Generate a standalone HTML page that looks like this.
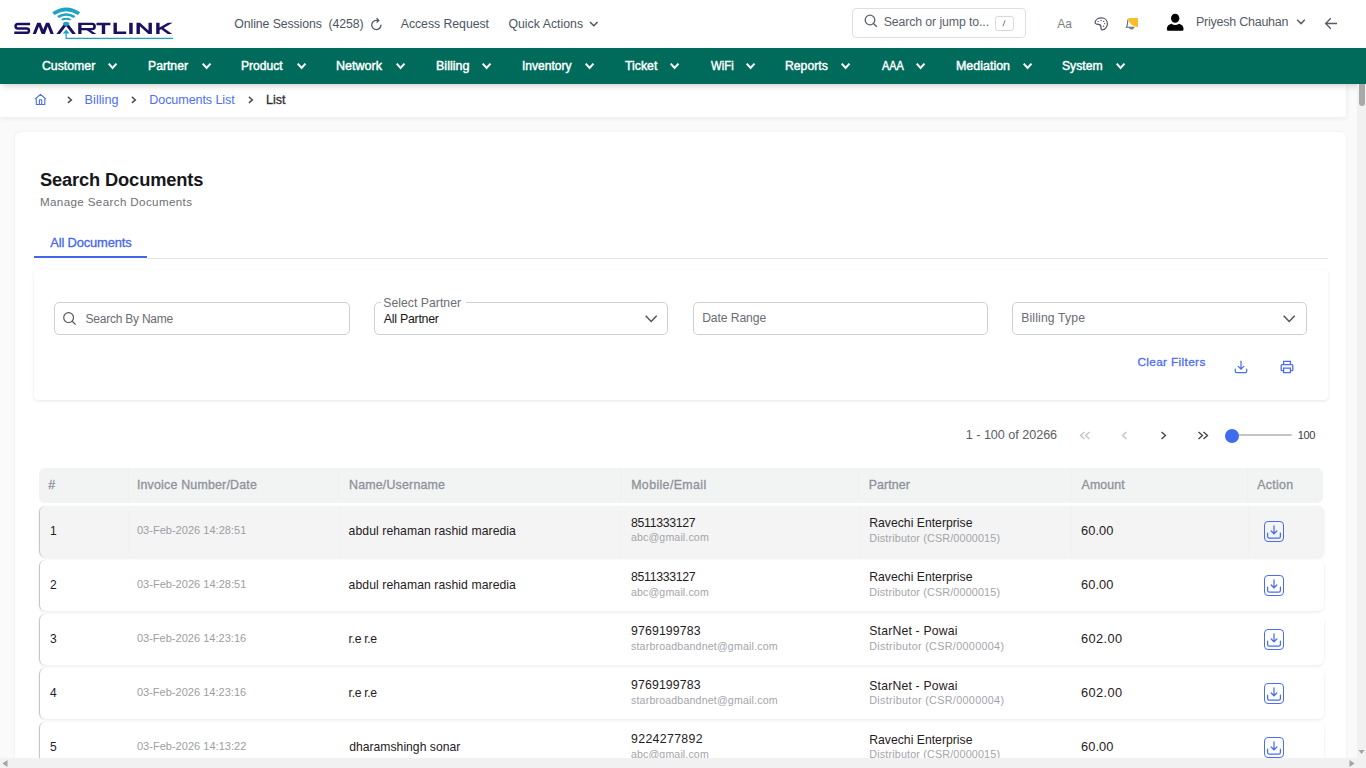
<!DOCTYPE html>
<html><head><meta charset="utf-8">
<style>
*{box-sizing:border-box;margin:0;padding:0}
html,body{width:1366px;height:768px;overflow:hidden;background:#fff;font-family:"Liberation Sans",sans-serif}
.a{position:absolute}
.t{position:absolute;white-space:pre;line-height:1;z-index:5}
svg{position:absolute;overflow:visible}
#nav{position:absolute;left:0;top:48px;width:1366px;height:36px;background:#006a5b;z-index:4;box-shadow:0 3px 7px -2px rgba(0,0,0,.22)}
#main{position:absolute;left:0;top:84px;width:1357px;height:674px;background:#fafafa;overflow:hidden}
#bc{position:absolute;left:0;top:0;width:1346px;height:33px;background:#fff;box-shadow:0 1px 5px rgba(0,0,0,.08)}
#card{position:absolute;left:15px;top:48px;width:1331px;height:720px;background:#fff;border-radius:6px;box-shadow:0 0 3px rgba(0,0,0,.07)}
#vsb{position:absolute;left:1357px;top:84px;width:9px;height:674px;background:#f1f1f1;z-index:6}
#hsb{position:absolute;left:0;top:758px;width:1366px;height:10px;background:#f1f1f1;z-index:6}
.inp{position:absolute;border:1.2px solid #cdd0d7;border-radius:5px;background:#fff}
.row{position:absolute;left:39px;width:1285px;height:50.5px;border-radius:6px;background:#fff;border-left:1px solid #c3c7cf;box-shadow:0 1px 3px rgba(0,0,0,.09)}
.sep{position:absolute;top:0;width:1px;height:100%;background:rgba(0,0,0,.012)}
.act{position:absolute;left:1263.5px;width:20.5px;height:21px;border:1.4px solid #4c6cf3;border-radius:4px}
</style></head><body>
<!-- header -->
<svg style="left:0;top:0" width="190" height="48" viewBox="0 0 190 48">
  <path d="M30.1 24.05 H17.9 Q15.55 24.05 15.55 26.3 Q15.55 28.5 17.9 28.5 H26.6 Q28.95 28.5 28.95 30.65 Q28.95 32.75 26.6 32.75 H14.3" fill="none" stroke="#1b1060" stroke-width="2.5"/>
  <g fill="#1b1060">
    <path d="M32.7 34 L37.2 22.8 L40.5 22.8 L43.25 29.6 L46 22.8 L49.3 22.8 L53.8 34 L50.5 34 L47.65 26.6 L44.9 34 L41.6 34 L38.85 26.6 L36 34 Z"/>
    <path d="M56.4 34 L64.3 23.5 L67.9 23.5 L75.9 34 L72.3 34 L66.1 25.9 L60 34 Z"/>
    <path d="M78.2 22.8 H92.3 Q95.9 22.8 95.9 26.4 Q95.9 30.2 92.3 30.2 H81.5 V28 H92 Q93.2 28 93.2 26.45 Q93.2 25.05 92 25.05 H81.5 V34 H78.2 Z"/>
    <path d="M85.8 29.6 L89.6 29.6 L96.5 34 L92.2 34 Z"/>
    <path d="M96.5 22.8 H110.4 V25.3 H105.2 V34 H101.8 V25.3 H96.5 Z"/>
    <path d="M113.5 22.8 H116.9 V31.5 H126.2 V34 H113.5 Z"/>
    <path d="M129.2 22.8 H132.7 V34 H129.2 Z"/>
    <path d="M136.5 34 V22.8 H140 L148.5 30.6 V22.8 H151.9 V34 H148.4 L139.9 26.2 V34 Z"/>
    <path d="M156.2 22.8 H159.6 V27.4 L167.9 22.8 H172.6 L163.6 27.9 L172.3 34 H167.7 L161.3 29.2 L159.6 30.1 V34 H156.2 Z"/>
  </g>
  <g fill="#1ea4c2" stroke="none">
    <path d="M52.2 12.3 Q66.2 2.6 80.2 12.3 L77.9 15 Q66.2 7.6 54.5 15 Z"/>
    <path d="M57.1 15.9 Q66.2 10.6 75.5 15.9 L73.7 17.9 Q66.2 13.6 58.9 17.9 Z"/>
    <path d="M61 19.2 Q66.2 16.3 71.3 19.2 L70 20.6 Q66.2 18.7 62.3 20.6 Z"/>
    <ellipse cx="66.15" cy="23.75" rx="3.15" ry="2.05"/>
    <path d="M62.7 33.4 L66.15 29.6 L69.6 33.4 Z"/>
  </g>
  <path d="M66.15 33 V38.4 H173" fill="none" stroke="#1ea4c2" stroke-width="1.2"/>
</svg>
<!-- refresh icon -->
<svg style="left:370px;top:17px" width="14" height="14" viewBox="0 0 14 14"><path d="M10.9 7.6 A4.6 4.6 0 1 1 6.4 3.4 H8.6 M6.6 1.2 L8.8 3.4 L6.6 5.6" fill="none" stroke="#4d5562" stroke-width="1.25"/></svg>
<!-- quick actions chevron -->
<svg style="left:589px;top:20px" width="10" height="8" viewBox="0 0 10 8"><path d="M1 2 L4.8 5.8 L8.6 2" fill="none" stroke="#4d5562" stroke-width="1.5"/></svg>
<!-- search box -->
<div class="a" style="left:852px;top:8px;width:174px;height:30px;border:1px solid #dcdfe5;border-radius:4px"></div>
<svg style="left:864px;top:14px" width="14" height="14" viewBox="0 0 14 14"><circle cx="6" cy="6" r="4.8" fill="none" stroke="#5a616d" stroke-width="1.3"/><path d="M9.5 9.5 L12.8 12.8" stroke="#5a616d" stroke-width="1.4"/></svg>
<div class="a" style="left:994.5px;top:15.5px;width:19px;height:15px;border:1px solid #d6d9de;border-radius:3px"></div>
<svg style="left:1000px;top:18px" width="8" height="10" viewBox="0 0 8 10"><path d="M5.1 2.4 L3 8.2" stroke="#6f757e" stroke-width="0.95"/></svg>
<!-- palette icon -->
<svg style="left:1094px;top:17px" width="15" height="14" viewBox="0 0 15 14"><path d="M7.5 0.9 C11 0.9 13.4 3.5 13.4 6.8 C13.4 10.4 10.8 12.8 8.3 12.8 C7.2 12.8 6.9 11.8 7 10.5 C7.1 8.6 6.3 7.6 4.4 7.4 C2.5 7.2 1 6.9 1.1 5.6 C1.3 3 4 0.9 7.5 0.9 Z" fill="none" stroke="#4f5560" stroke-width="1.2"/><g fill="#4f5560"><circle cx="4.3" cy="4.6" r=".7"/><circle cx="7.1" cy="3.5" r=".7"/><circle cx="9.7" cy="4.4" r=".7"/><circle cx="10.7" cy="6.6" r=".7"/><circle cx="9.6" cy="9.3" r=".7"/></g></svg>
<!-- bell -->
<svg style="left:1124px;top:17px" width="16" height="14" viewBox="0 0 16 14"><path d="M3.9 2.6 C3.7 5 3.5 8.6 2.4 10.2 H10.5 M5.6 10.8 Q7.5 12.9 9.4 10.8" fill="none" stroke="#5f6670" stroke-width="1.1"/><path d="M4.2 1 H14 V10 C9 10 4.6 6.5 4.2 1 Z" fill="#fbbc2a"/></svg>
<!-- user -->
<svg style="left:1166px;top:13px" width="19" height="19" viewBox="0 0 19 19"><ellipse cx="9.2" cy="5.3" rx="4.15" ry="4.5" fill="#000"/><path d="M0.8 16.2 C0.8 13.3 2.8 11.4 5.4 10.8 Q9.2 13.4 13 10.8 C15.6 11.4 17.6 13.3 17.6 16.2 Q17.6 17.8 16 17.8 H2.4 Q0.8 17.8 0.8 16.2 Z" fill="#000"/></svg>
<svg style="left:1296px;top:18px" width="10" height="8" viewBox="0 0 10 8"><path d="M1.2 1.8 L5 5.6 L8.8 1.8" fill="none" stroke="#555c68" stroke-width="1.5"/></svg>
<!-- back arrow -->
<svg style="left:1324px;top:17px" width="14" height="13" viewBox="0 0 14 13"><path d="M13 6.5 H1.8 M6.8 1.3 L1.6 6.5 L6.8 11.7" fill="none" stroke="#555c68" stroke-width="1.3"/></svg>

<!-- nav -->
<div id="nav">
<!--NAVCHEV-->
</div>

<div id="main">
  <div id="bc"></div>
  <div id="card"></div>
</div>
<svg style="left:107.30px;top:62.20px;z-index:5" width="11.2" height="7.6" viewBox="0 0 11.2 7.6"><path d="M1.7 1.7 L5.60 6.00 L9.50 1.7" fill="none" stroke="#fff" stroke-width="2.0"/></svg>
<svg style="left:201.00px;top:62.20px;z-index:5" width="11.2" height="7.6" viewBox="0 0 11.2 7.6"><path d="M1.7 1.7 L5.60 6.00 L9.50 1.7" fill="none" stroke="#fff" stroke-width="2.0"/></svg>
<svg style="left:295.50px;top:62.20px;z-index:5" width="11.2" height="7.6" viewBox="0 0 11.2 7.6"><path d="M1.7 1.7 L5.60 6.00 L9.50 1.7" fill="none" stroke="#fff" stroke-width="2.0"/></svg>
<svg style="left:395.20px;top:62.20px;z-index:5" width="11.2" height="7.6" viewBox="0 0 11.2 7.6"><path d="M1.7 1.7 L5.60 6.00 L9.50 1.7" fill="none" stroke="#fff" stroke-width="2.0"/></svg>
<svg style="left:481.20px;top:62.20px;z-index:5" width="11.2" height="7.6" viewBox="0 0 11.2 7.6"><path d="M1.7 1.7 L5.60 6.00 L9.50 1.7" fill="none" stroke="#fff" stroke-width="2.0"/></svg>
<svg style="left:584.00px;top:62.20px;z-index:5" width="11.2" height="7.6" viewBox="0 0 11.2 7.6"><path d="M1.7 1.7 L5.60 6.00 L9.50 1.7" fill="none" stroke="#fff" stroke-width="2.0"/></svg>
<svg style="left:669.10px;top:62.20px;z-index:5" width="11.2" height="7.6" viewBox="0 0 11.2 7.6"><path d="M1.7 1.7 L5.60 6.00 L9.50 1.7" fill="none" stroke="#fff" stroke-width="2.0"/></svg>
<svg style="left:745.00px;top:62.20px;z-index:5" width="11.2" height="7.6" viewBox="0 0 11.2 7.6"><path d="M1.7 1.7 L5.60 6.00 L9.50 1.7" fill="none" stroke="#fff" stroke-width="2.0"/></svg>
<svg style="left:840.30px;top:62.20px;z-index:5" width="11.2" height="7.6" viewBox="0 0 11.2 7.6"><path d="M1.7 1.7 L5.60 6.00 L9.50 1.7" fill="none" stroke="#fff" stroke-width="2.0"/></svg>
<svg style="left:915.30px;top:62.20px;z-index:5" width="11.2" height="7.6" viewBox="0 0 11.2 7.6"><path d="M1.7 1.7 L5.60 6.00 L9.50 1.7" fill="none" stroke="#fff" stroke-width="2.0"/></svg>
<svg style="left:1022.40px;top:62.20px;z-index:5" width="11.2" height="7.6" viewBox="0 0 11.2 7.6"><path d="M1.7 1.7 L5.60 6.00 L9.50 1.7" fill="none" stroke="#fff" stroke-width="2.0"/></svg>
<svg style="left:1115.00px;top:62.20px;z-index:5" width="11.2" height="7.6" viewBox="0 0 11.2 7.6"><path d="M1.7 1.7 L5.60 6.00 L9.50 1.7" fill="none" stroke="#fff" stroke-width="2.0"/></svg>
<svg style="left:34px;top:93px;z-index:5" width="14" height="13" viewBox="0 0 14 13"><path d="M1.2 6 L6.5 1.3 L11.8 6 M2.3 5.1 V11.5 H10.8 V5.1 M5.4 11.5 V6.8 H7.7 V11.5" fill="none" stroke="#4f6ef2" stroke-width="1.1" stroke-linejoin="round"/></svg>
<svg style="left:66.7px;top:96px;z-index:5" width="6" height="8" viewBox="0 0 6 8"><path d="M0.9 0.9 L4.4 3.9 L0.9 6.9" fill="none" stroke="#4a4c51" stroke-width="1.4"/></svg>
<svg style="left:131.2px;top:96px;z-index:5" width="6" height="8" viewBox="0 0 6 8"><path d="M0.9 0.9 L4.4 3.9 L0.9 6.9" fill="none" stroke="#4a4c51" stroke-width="1.4"/></svg>
<svg style="left:248.0px;top:96px;z-index:5" width="6" height="8" viewBox="0 0 6 8"><path d="M0.9 0.9 L4.4 3.9 L0.9 6.9" fill="none" stroke="#4a4c51" stroke-width="1.4"/></svg>
<div class="a" style="left:147px;top:258px;width:1181px;height:1px;background:#e3e4e6"></div>
<div class="a" style="left:34px;top:256px;width:113px;height:2.3px;background:#4466ee"></div>
<div class="a" style="left:33.5px;top:270px;width:1294.5px;height:129.5px;border-radius:4px;background:#fff;box-shadow:0 1px 3px rgba(0,0,0,.1)"></div>
<div class="inp" style="left:54px;top:301.5px;width:296px;height:33.3px"></div>
<svg style="left:62px;top:310.5px;z-index:5" width="15" height="15" viewBox="0 0 15 15"><circle cx="6.6" cy="6.6" r="4.9" fill="none" stroke="#55585e" stroke-width="1.2"/><path d="M10.2 10.2 L13.6 13.6" stroke="#55585e" stroke-width="1.3"/></svg>
<div class="inp" style="left:374px;top:301.5px;width:294px;height:33.3px"></div>
<div class="a" style="left:380.5px;top:298px;width:85.5px;height:6px;background:#fff"></div>
<svg style="left:643.80px;top:313.80px;z-index:5" width="14.4" height="9.0" viewBox="0 0 14.4 9.0"><path d="M1.7 1.7 L7.20 7.40 L12.70 1.7" fill="none" stroke="#505358" stroke-width="1.5"/></svg>
<div class="inp" style="left:693px;top:301.5px;width:295px;height:33.3px"></div>
<div class="inp" style="left:1012px;top:301.5px;width:295px;height:33.3px"></div>
<svg style="left:1282.30px;top:314.20px;z-index:5" width="14.4" height="9.0" viewBox="0 0 14.4 9.0"><path d="M1.7 1.7 L7.20 7.40 L12.70 1.7" fill="none" stroke="#505358" stroke-width="1.5"/></svg>
<svg style="left:1233px;top:359px;z-index:5" width="16" height="16" viewBox="0 0 16 16"><path d="M8 2.2 V10 M5.2 7.4 L8 10.2 L10.8 7.4 M2.3 10 V12.2 Q2.3 13.6 3.7 13.6 H12.3 Q13.7 13.6 13.7 12.2 V10" fill="none" stroke="#4c6cf3" stroke-width="1.25" stroke-linecap="round"/></svg>
<svg style="left:1279px;top:359px;z-index:5" width="16" height="16" viewBox="0 0 16 16"><path d="M4.6 5.6 V2.4 H11.4 V5.6 M4.6 11.6 H2.8 Q2.2 11.6 2.2 11 V6.6 Q2.2 5.6 3.2 5.6 H12.8 Q13.8 5.6 13.8 6.6 V11 Q13.8 11.6 13.2 11.6 H11.4 M4.6 9.2 H11.4 V13.6 H4.6 Z" fill="none" stroke="#4c6cf3" stroke-width="1.3"/></svg>
<svg style="left:1078.5px;top:431.0px;z-index:5" width="12" height="10" viewBox="0 0 12 10"><path d="M5.5 1 L1.5 4.5 L5.5 8 M10.5 1 L6.5 4.5 L10.5 8" fill="none" stroke="#c0c2c6" stroke-width="1.3"/></svg>
<svg style="left:1121.0px;top:431.0px;z-index:5" width="7" height="10" viewBox="0 0 7 10"><path d="M5.5 1 L1.5 4.5 L5.5 8" fill="none" stroke="#c0c2c6" stroke-width="1.3"/></svg>
<svg style="left:1159.8px;top:431.0px;z-index:5" width="7" height="10" viewBox="0 0 7 10"><path d="M1.5 1 L5.5 4.5 L1.5 8" fill="none" stroke="#3f4146" stroke-width="1.3"/></svg>
<svg style="left:1197.2px;top:431.0px;z-index:5" width="12" height="10" viewBox="0 0 12 10"><path d="M1.5 1 L5.5 4.5 L1.5 8 M6.5 1 L10.5 4.5 L6.5 8" fill="none" stroke="#3f4146" stroke-width="1.3"/></svg>
<div class="a" style="left:1232px;top:434.3px;width:59.5px;height:2px;background:#c3c4c6;border-radius:1px"></div>
<div class="a" style="left:1224.6px;top:428.6px;width:14px;height:14px;background:#3d6cf0;border-radius:50%"></div>
<div class="a" style="left:39px;top:468px;width:1284px;height:34.5px;background:#f2f3f3;border-radius:6px"></div>
<div class="a" style="left:127.6px;top:468px;width:1px;height:34.5px;background:rgba(0,0,0,.012)"></div>
<div class="a" style="left:337.7px;top:468px;width:1px;height:34.5px;background:rgba(0,0,0,.012)"></div>
<div class="a" style="left:620px;top:468px;width:1px;height:34.5px;background:rgba(0,0,0,.012)"></div>
<div class="a" style="left:857.7px;top:468px;width:1px;height:34.5px;background:rgba(0,0,0,.012)"></div>
<div class="a" style="left:1070.3px;top:468px;width:1px;height:34.5px;background:rgba(0,0,0,.012)"></div>
<div class="a" style="left:1247.4px;top:468px;width:1px;height:34.5px;background:rgba(0,0,0,.012)"></div>
<div class="row" style="top:506.00px;background:#f4f4f4"><div class="sep" style="left:88.6px"></div><div class="sep" style="left:298.7px"></div><div class="sep" style="left:581px"></div><div class="sep" style="left:818.7px"></div><div class="sep" style="left:1031.3px"></div><div class="sep" style="left:1208.4px"></div></div>
<div class="act" style="top:521.00px;z-index:5"></div>
<svg style="left:1266px;top:523.50px;z-index:5" width="16" height="16" viewBox="0 0 16 16"><path d="M8 1.8 V9.6 M5.2 7 L8 9.8 L10.8 7 M1.6 9.2 V12.4 Q1.6 14.1 3.3 14.1 H12.7 Q14.4 14.1 14.4 12.4 V9.2" fill="none" stroke="#4c6cf3" stroke-width="1.25" stroke-linecap="round"/></svg>
<div class="row" style="top:560.10px;background:#fff"></div>
<div class="act" style="top:575.10px;z-index:5"></div>
<svg style="left:1266px;top:577.60px;z-index:5" width="16" height="16" viewBox="0 0 16 16"><path d="M8 1.8 V9.6 M5.2 7 L8 9.8 L10.8 7 M1.6 9.2 V12.4 Q1.6 14.1 3.3 14.1 H12.7 Q14.4 14.1 14.4 12.4 V9.2" fill="none" stroke="#4c6cf3" stroke-width="1.25" stroke-linecap="round"/></svg>
<div class="row" style="top:614.20px;background:#fff"></div>
<div class="act" style="top:629.20px;z-index:5"></div>
<svg style="left:1266px;top:631.70px;z-index:5" width="16" height="16" viewBox="0 0 16 16"><path d="M8 1.8 V9.6 M5.2 7 L8 9.8 L10.8 7 M1.6 9.2 V12.4 Q1.6 14.1 3.3 14.1 H12.7 Q14.4 14.1 14.4 12.4 V9.2" fill="none" stroke="#4c6cf3" stroke-width="1.25" stroke-linecap="round"/></svg>
<div class="row" style="top:668.30px;background:#fff"></div>
<div class="act" style="top:683.30px;z-index:5"></div>
<svg style="left:1266px;top:685.80px;z-index:5" width="16" height="16" viewBox="0 0 16 16"><path d="M8 1.8 V9.6 M5.2 7 L8 9.8 L10.8 7 M1.6 9.2 V12.4 Q1.6 14.1 3.3 14.1 H12.7 Q14.4 14.1 14.4 12.4 V9.2" fill="none" stroke="#4c6cf3" stroke-width="1.25" stroke-linecap="round"/></svg>
<div class="row" style="top:722.40px;background:#fff"></div>
<div class="act" style="top:737.40px;z-index:5"></div>
<svg style="left:1266px;top:739.90px;z-index:5" width="16" height="16" viewBox="0 0 16 16"><path d="M8 1.8 V9.6 M5.2 7 L8 9.8 L10.8 7 M1.6 9.2 V12.4 Q1.6 14.1 3.3 14.1 H12.7 Q14.4 14.1 14.4 12.4 V9.2" fill="none" stroke="#4c6cf3" stroke-width="1.25" stroke-linecap="round"/></svg>
<div id="vsb"><div class="a" style="left:1.5px;top:0;width:6.5px;height:21.5px;background:#a9a9a9;border-radius:0 0 4px 4px"></div>
<svg style="left:0;top:664px" width="9" height="8" viewBox="0 0 9 8"><path d="M1.5 2 H7.5 L4.5 6 Z" fill="#a3a3a3"/></svg></div>
<div id="hsb">
<svg style="left:1px;top:1px" width="8" height="9" viewBox="0 0 8 9"><path d="M6.5 1 V8 L1.5 4.5 Z" fill="#a3a3a3"/></svg>
<svg style="left:1348px;top:1px" width="8" height="9" viewBox="0 0 8 9"><path d="M1.5 1 V8 L6.5 4.5 Z" fill="#a3a3a3"/></svg>
</div>
<div class="t" id="t0" style="left:234.30px;top:17.55px;font-size:12.3px;color:#4d5562;letter-spacing:-0.090px">Online Sessions  (4258)</div>
<div class="t" id="t1" style="left:400.75px;top:18.14px;font-size:12.3px;color:#4d5562;letter-spacing:-0.046px">Access Request</div>
<div class="t" id="t2" style="left:508.40px;top:18.14px;font-size:12.3px;color:#4d5562;letter-spacing:0.020px">Quick Actions</div>
<div class="t" id="t3" style="left:883.70px;top:15.65px;font-size:12.3px;color:#5a616d;letter-spacing:-0.100px">Search or jump to...</div>
<div class="t" id="t4" style="left:1057.30px;top:17.90px;font-size:12px;color:#7a7f87">Aa</div>
<div class="t" id="t5" style="left:1196.00px;top:15.95px;font-size:12.5px;color:#555c68;letter-spacing:-0.244px">Priyesh Chauhan</div>
<div class="t" id="t6" style="left:42.00px;top:58.89px;font-size:13.3px;color:#ffffff;-webkit-text-stroke:0.45px #ffffff;transform:scaleX(0.9236);transform-origin:0 0">Customer</div>
<div class="t" id="t7" style="left:148.00px;top:58.89px;font-size:13.3px;color:#ffffff;-webkit-text-stroke:0.45px #ffffff;transform:scaleX(0.9173);transform-origin:0 0">Partner</div>
<div class="t" id="t8" style="left:241.00px;top:58.89px;font-size:13.3px;color:#ffffff;-webkit-text-stroke:0.45px #ffffff;transform:scaleX(0.9085);transform-origin:0 0">Product</div>
<div class="t" id="t9" style="left:336.00px;top:58.89px;font-size:13.3px;color:#ffffff;-webkit-text-stroke:0.45px #ffffff;transform:scaleX(0.9433);transform-origin:0 0">Network</div>
<div class="t" id="t10" style="left:435.55px;top:58.89px;font-size:13.3px;color:#ffffff;-webkit-text-stroke:0.45px #ffffff;transform:scaleX(0.9421);transform-origin:0 0">Billing</div>
<div class="t" id="t11" style="left:521.60px;top:58.89px;font-size:13.3px;color:#ffffff;-webkit-text-stroke:0.45px #ffffff;transform:scaleX(0.9074);transform-origin:0 0">Inventory</div>
<div class="t" id="t12" style="left:625.20px;top:58.89px;font-size:13.3px;color:#ffffff;-webkit-text-stroke:0.45px #ffffff;transform:scaleX(0.9254);transform-origin:0 0">Ticket</div>
<div class="t" id="t13" style="left:710.55px;top:58.89px;font-size:13.3px;color:#ffffff;-webkit-text-stroke:0.45px #ffffff;transform:scaleX(0.8536);transform-origin:0 0">WiFi</div>
<div class="t" id="t14" style="left:785.00px;top:58.89px;font-size:13.3px;color:#ffffff;-webkit-text-stroke:0.45px #ffffff;transform:scaleX(0.9186);transform-origin:0 0">Reports</div>
<div class="t" id="t15" style="left:881.80px;top:58.89px;font-size:13.3px;color:#ffffff;-webkit-text-stroke:0.45px #ffffff;transform:scaleX(0.8212);transform-origin:0 0">AAA</div>
<div class="t" id="t16" style="left:955.80px;top:58.89px;font-size:13.3px;color:#ffffff;-webkit-text-stroke:0.45px #ffffff;transform:scaleX(0.9366);transform-origin:0 0">Mediation</div>
<div class="t" id="t17" style="left:1062.00px;top:58.89px;font-size:13.3px;color:#ffffff;-webkit-text-stroke:0.45px #ffffff;transform:scaleX(0.9140);transform-origin:0 0">System</div>
<div class="t" id="t18" style="left:84.60px;top:93.89px;font-size:12.6px;color:#4f6ef2;letter-spacing:0.047px">Billing</div>
<div class="t" id="t19" style="left:149.30px;top:93.89px;font-size:12.6px;color:#4f6ef2;letter-spacing:-0.109px">Documents List</div>
<div class="t" id="t20" style="left:266.00px;top:93.59px;font-size:12.6px;color:#2f3033;-webkit-text-stroke:0.3px #2f3033;letter-spacing:-0.053px">List</div>
<div class="t" id="t21" style="left:40.00px;top:170.54px;font-size:18.3px;color:#16171a;font-weight:bold;letter-spacing:-0.145px">Search Documents</div>
<div class="t" id="t22" style="left:40.00px;top:195.74px;font-size:11.6px;color:#6d7076;letter-spacing:0.377px">Manage Search Documents</div>
<div class="t" id="t23" style="left:50.20px;top:237.14px;font-size:12.9px;color:#4466ee;-webkit-text-stroke:0.3px #4466ee;letter-spacing:-0.134px">All Documents</div>
<div class="t" id="t24" style="left:85.60px;top:313.00px;font-size:12px;color:#6a6d73;letter-spacing:-0.239px">Search By Name</div>
<div class="t" id="t25" style="left:383.30px;top:296.63px;font-size:12.2px;color:#6a6d73;letter-spacing:0.040px">Select Partner</div>
<div class="t" id="t26" style="left:383.70px;top:313.26px;font-size:12.4px;color:#17181b;letter-spacing:-0.254px">All Partner</div>
<div class="t" id="t27" style="left:702.20px;top:311.63px;font-size:12.2px;color:#6a6d73;letter-spacing:-0.116px">Date Range</div>
<div class="t" id="t28" style="left:1021.20px;top:311.63px;font-size:12.2px;color:#6a6d73;letter-spacing:0.152px">Billing Type</div>
<div class="t" id="t29" style="left:1137.40px;top:356.67px;font-size:11.8px;color:#4c6cf3;-webkit-text-stroke:0.3px #4c6cf3;letter-spacing:0.361px">Clear Filters</div>
<div class="t" id="t30" style="left:965.80px;top:428.59px;font-size:12.6px;color:#5b5e63;letter-spacing:-0.028px">1 - 100 of 20266</div>
<div class="t" id="t31" style="left:1297.80px;top:429.65px;font-size:11px;color:#3a3c40;letter-spacing:-0.442px">100</div>
<div class="t" id="t32" style="left:48.30px;top:478.56px;font-size:12.4px;color:#8e929a;-webkit-text-stroke:0.3px #8e929a">#</div>
<div class="t" id="t33" style="left:136.90px;top:478.56px;font-size:12.4px;color:#8e929a;-webkit-text-stroke:0.3px #8e929a;letter-spacing:0.197px">Invoice Number/Date</div>
<div class="t" id="t34" style="left:349.00px;top:478.56px;font-size:12.4px;color:#8e929a;-webkit-text-stroke:0.3px #8e929a;letter-spacing:0.196px">Name/Username</div>
<div class="t" id="t35" style="left:631.20px;top:478.56px;font-size:12.4px;color:#8e929a;-webkit-text-stroke:0.3px #8e929a;letter-spacing:0.365px">Mobile/Email</div>
<div class="t" id="t36" style="left:868.80px;top:478.56px;font-size:12.4px;color:#8e929a;-webkit-text-stroke:0.3px #8e929a;letter-spacing:0.063px">Partner</div>
<div class="t" id="t37" style="left:1081.60px;top:478.56px;font-size:12.4px;color:#8e929a;-webkit-text-stroke:0.3px #8e929a;letter-spacing:0.060px">Amount</div>
<div class="t" id="t38" style="left:1257.20px;top:478.56px;font-size:12.4px;color:#8e929a;-webkit-text-stroke:0.3px #8e929a;letter-spacing:0.313px">Action</div>
<div class="t" id="t39" style="left:50.00px;top:524.60px;font-size:12px;color:#1f2023">1</div>
<div class="t" id="t40" style="left:136.90px;top:525.05px;font-size:11px;color:#9c9ea3;letter-spacing:0.031px">03-Feb-2026 14:28:51</div>
<div class="t" id="t41" style="left:348.60px;top:525.03px;font-size:12.2px;color:#1f2023;letter-spacing:0.074px">abdul rehaman rashid maredia</div>
<div class="t" id="t42" style="left:631.00px;top:516.64px;font-size:12.3px;color:#1f2023;letter-spacing:-0.322px">8511333127</div>
<div class="t" id="t43" style="left:631.00px;top:532.44px;font-size:10.6px;color:#a3a5aa;letter-spacing:0.134px">abc@gmail.com</div>
<div class="t" id="t44" style="left:869.25px;top:516.83px;font-size:12.2px;color:#1f2023;letter-spacing:0.012px">Ravechi Enterprise</div>
<div class="t" id="t45" style="left:869.25px;top:532.82px;font-size:10.8px;color:#a3a5aa;letter-spacing:0.148px">Distributor (CSR/0000015)</div>
<div class="t" id="t46" style="left:1081.00px;top:525.32px;font-size:12.8px;color:#1f2023;letter-spacing:0.089px">60.00</div>
<div class="t" id="t47" style="left:50.00px;top:578.70px;font-size:12px;color:#1f2023">2</div>
<div class="t" id="t48" style="left:136.90px;top:579.05px;font-size:11px;color:#9c9ea3;letter-spacing:0.031px">03-Feb-2026 14:28:51</div>
<div class="t" id="t49" style="left:348.60px;top:579.03px;font-size:12.2px;color:#1f2023;letter-spacing:0.074px">abdul rehaman rashid maredia</div>
<div class="t" id="t50" style="left:631.00px;top:570.75px;font-size:12.3px;color:#1f2023;letter-spacing:-0.322px">8511333127</div>
<div class="t" id="t51" style="left:631.00px;top:586.59px;font-size:10.6px;color:#a3a5aa;letter-spacing:0.134px">abc@gmail.com</div>
<div class="t" id="t52" style="left:869.25px;top:570.93px;font-size:12.2px;color:#1f2023;letter-spacing:0.012px">Ravechi Enterprise</div>
<div class="t" id="t53" style="left:869.25px;top:586.92px;font-size:10.8px;color:#a3a5aa;letter-spacing:0.148px">Distributor (CSR/0000015)</div>
<div class="t" id="t54" style="left:1081.00px;top:579.32px;font-size:12.8px;color:#1f2023;letter-spacing:0.089px">60.00</div>
<div class="t" id="t55" style="left:50.00px;top:633.40px;font-size:12px;color:#1f2023">3</div>
<div class="t" id="t56" style="left:136.90px;top:632.80px;font-size:11px;color:#9c9ea3;letter-spacing:0.020px">03-Feb-2026 14:23:16</div>
<div class="t" id="t57" style="left:348.60px;top:632.78px;font-size:12.2px;color:#1f2023;letter-spacing:-0.334px">r.e r.e</div>
<div class="t" id="t58" style="left:631.00px;top:625.05px;font-size:12.3px;color:#1f2023;letter-spacing:0.130px">9769199783</div>
<div class="t" id="t59" style="left:631.00px;top:640.69px;font-size:10.6px;color:#a3a5aa;letter-spacing:0.180px">starbroadbandnet@gmail.com</div>
<div class="t" id="t60" style="left:869.25px;top:625.03px;font-size:12.2px;color:#1f2023;letter-spacing:0.201px">StarNet - Powai</div>
<div class="t" id="t61" style="left:869.25px;top:641.02px;font-size:10.8px;color:#a3a5aa;letter-spacing:0.314px">Distributor (CSR/0000004)</div>
<div class="t" id="t62" style="left:1081.00px;top:633.32px;font-size:12.8px;color:#1f2023;letter-spacing:0.372px">602.00</div>
<div class="t" id="t63" style="left:50.00px;top:687.15px;font-size:12px;color:#1f2023">4</div>
<div class="t" id="t64" style="left:136.90px;top:686.65px;font-size:11px;color:#9c9ea3;letter-spacing:0.020px">03-Feb-2026 14:23:16</div>
<div class="t" id="t65" style="left:348.60px;top:686.63px;font-size:12.2px;color:#1f2023;letter-spacing:-0.334px">r.e r.e</div>
<div class="t" id="t66" style="left:631.00px;top:679.15px;font-size:12.3px;color:#1f2023;letter-spacing:0.130px">9769199783</div>
<div class="t" id="t67" style="left:631.00px;top:694.79px;font-size:10.6px;color:#a3a5aa;letter-spacing:0.180px">starbroadbandnet@gmail.com</div>
<div class="t" id="t68" style="left:869.25px;top:679.63px;font-size:12.2px;color:#1f2023;letter-spacing:0.201px">StarNet - Powai</div>
<div class="t" id="t69" style="left:869.25px;top:695.12px;font-size:10.8px;color:#a3a5aa;letter-spacing:0.314px">Distributor (CSR/0000004)</div>
<div class="t" id="t70" style="left:1081.00px;top:687.32px;font-size:12.8px;color:#1f2023;letter-spacing:0.372px">602.00</div>
<div class="t" id="t71" style="left:50.00px;top:741.00px;font-size:12px;color:#1f2023">5</div>
<div class="t" id="t72" style="left:136.90px;top:740.75px;font-size:11px;color:#9c9ea3;letter-spacing:0.031px">03-Feb-2026 14:13:22</div>
<div class="t" id="t73" style="left:349.20px;top:740.73px;font-size:12.2px;color:#1f2023">dharamshingh sonar</div>
<div class="t" id="t74" style="left:631.00px;top:733.25px;font-size:12.3px;color:#1f2023;letter-spacing:0.351px">9224277892</div>
<div class="t" id="t75" style="left:631.00px;top:748.89px;font-size:10.6px;color:#a3a5aa;letter-spacing:0.134px">abc@gmail.com</div>
<div class="t" id="t76" style="left:869.25px;top:734.03px;font-size:12.2px;color:#1f2023;letter-spacing:0.012px">Ravechi Enterprise</div>
<div class="t" id="t77" style="left:869.25px;top:749.22px;font-size:10.8px;color:#a3a5aa;letter-spacing:0.148px">Distributor (CSR/0000015)</div>
<div class="t" id="t78" style="left:1081.00px;top:741.32px;font-size:12.8px;color:#1f2023;letter-spacing:0.089px">60.00</div>
</body></html>
